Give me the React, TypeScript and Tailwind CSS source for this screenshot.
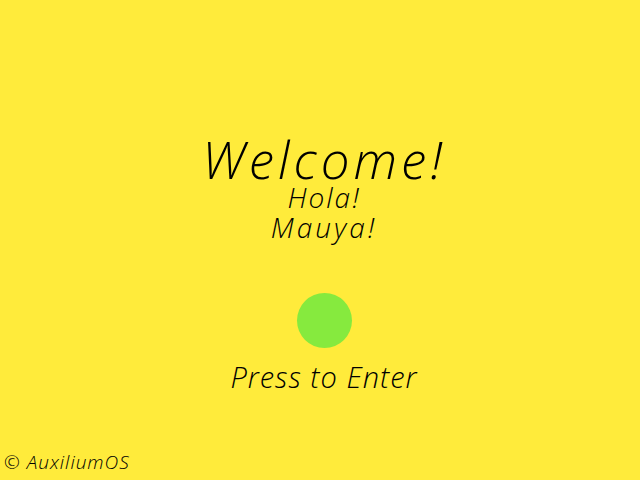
export default function App() {
  const f = { fontFamily: '"Open Sans", sans-serif' };
  return (
    <div className="relative w-[640px] h-[480px] bg-[#ffeb3b] text-black italic overflow-hidden" style={f}>
      <div className="flex flex-col items-center pt-[136px] pl-[8px]">
        <div className="text-[51px] leading-[46px] font-light tracking-[4px]">Welcome!</div>
        <div className="text-[28px] leading-[30px] font-light tracking-[2px]">Hola!</div>
        <div className="text-[28px] leading-[30px] font-light tracking-[3px]">Mauya!</div>
        <div className="w-[55px] h-[55px] rounded-full bg-[#86ea3e] mt-[51px]"></div>
        <div className="text-[29px] leading-[40px] font-light mt-[9px] tracking-[1px]">Press to Enter</div>
      </div>
      <div className="absolute left-[4px] bottom-[7px] text-[19px] leading-[22px] font-light tracking-[1px]">© AuxiliumOS</div>
    </div>
  );
}
